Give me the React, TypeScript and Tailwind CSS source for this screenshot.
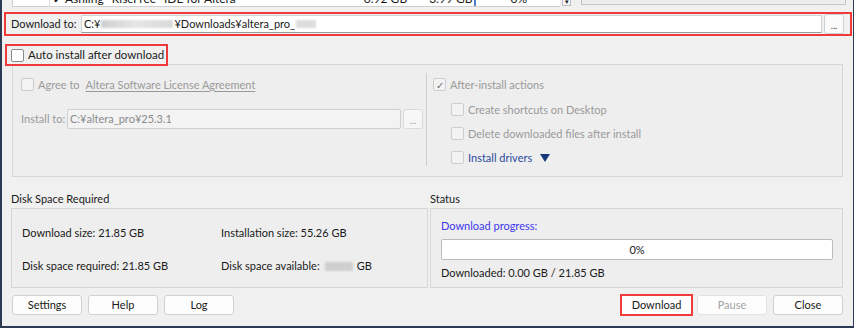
import React from 'react';

const font = { fontFamily: 'Lato, "Segoe UI", sans-serif' };

function Check({ checked = false, disabled = false }: { checked?: boolean; disabled?: boolean }) {
  return (
    <span
      className={`flex h-[13px] w-[13px] shrink-0 items-center justify-center rounded-[2px] border text-[10px] leading-none ${
        disabled ? 'border-[#cdcdcd] bg-[#f3f3f3] text-[#6d6d6d]' : 'border-[#8a8a8a] bg-white text-[#222]'
      }`}
    >
      {checked ? '✓' : ''}
    </span>
  );
}

function Btn({
  children,
  className = '',
}: {
  children: React.ReactNode;
  className?: string;
}) {
  return (
    <div
      className={`flex h-[20px] w-[70px] items-center justify-center rounded-[3px] border border-[#d0d0d0] bg-[#fdfdfd] text-[#1a1a1a] ${className}`}
    >
      {children}
    </div>
  );
}

function Dots({ disabled = false }: { disabled?: boolean }) {
  return (
    <div
      className={`ml-[2px] flex h-[20px] w-[20px] shrink-0 items-end justify-center rounded-[3px] border pb-[3px] text-[9px] leading-none ${
        disabled ? 'border-[#dadada] bg-[#f6f6f6] text-[#9a9a9a]' : 'border-[#cfcfcf] bg-[#fbfbfb] text-[#333]'
      }`}
    >
      ...
    </div>
  );
}

export default function App() {
  return (
    <div
      style={font}
      className="h-[328px] w-[854px] overflow-hidden whitespace-nowrap border-b-2 border-l-2 border-r border-[#2d3a53] bg-[#f0f0f0] text-[11px] leading-[16px] text-[#1a1a1a]"
    >
      {/* table row cut off above */}
      <div className="flex h-[8px] overflow-hidden">
        <div className="ml-[10px] flex h-[7px] w-[548px] border-b border-l border-[#cfcfcf] bg-white">
          <div className="h-full w-[37px] border-r border-[#dcdcdc]" />
          <div className="-mt-[9px] flex items-start">
            <span className="ml-[3px] text-[11px] font-bold">✓</span>
            <span className="ml-[3px] text-[12px]">Ashling* RiscFree* IDE for Altera</span>
            <span className="ml-[128px] text-[12px]">0.92 GB</span>
            <span className="ml-[22px] text-[12px]">3.99 GB</span>
          </div>
          <div className="ml-[2px] h-full w-[2px] bg-[#4b7fc8]" />
          <div className="-mt-[9px] ml-[34px] text-[12px]">0%</div>
        </div>
        <div className="-mt-[8px] ml-[2px] flex h-[14px] w-[9px] items-end justify-center border border-[#bdbdbd] bg-[#f7f7f7] text-[7px] leading-none">
          ▾
        </div>
        <div className="-mt-[8px] ml-[10px] h-[13px] w-[265px] border border-[#c6c6c6] bg-[#ededed]" />
      </div>

      {/* download to */}
      <div className="ml-[2px] mt-[4px] flex h-[24px] w-[848px] items-center border-2 border-[#ef3b3b]">
        <span className="w-[75px] pl-[5px]">Download to:</span>
        <div className="flex h-[18px] w-[741px] items-center overflow-hidden border border-[#d2d2d2] border-b-[#9b9b9b] bg-white px-[2px]">
          <span>C:¥</span>
          <span className="mx-[1px] h-[8px] w-[72px] bg-gradient-to-r from-[#cfcfcf] via-[#e6e6e6] to-[#d8d8d8] blur-[1px]" />
          <span>¥Downloads¥altera_pro_</span>
          <span className="ml-[1px] h-[8px] w-[20px] bg-[#dcdcdc] blur-[1px]" />
        </div>
        <Dots />
      </div>

      {/* auto install */}
      <div className="relative z-10 ml-[3px] mt-[8px] flex h-[22px] w-[163px] items-center border-2 border-[#ef3b3b] pl-[4px]">
        <Check />
        <span className="ml-[4px] text-[11.5px]">Auto install after download</span>
      </div>

      {/* install options */}
      <div className="-mt-[2px] ml-[10px] flex h-[113px] w-[831px] border border-[#d6d6d6] bg-[#eeeeee]">
        <div className="w-[413px] pl-[8px] pt-[13px] text-[#9a9a9a]">
          <div className="flex h-[13px] items-center">
            <Check disabled />
            <span className="ml-[4px]">Agree to</span>
            <span className="ml-[6px] underline decoration-[#9a9a9a] underline-offset-2">
              Altera Software License Agreement
            </span>
          </div>
          <div className="mt-[18px] flex h-[20px] items-center">
            <span className="w-[46px]">Install to:</span>
            <div className="flex h-[20px] w-[334px] items-center rounded-[2px] border border-[#cfcfcf] bg-[#f3f3f3] px-[2px] text-[#8a8a8a]">
              C:¥altera_pro¥25.3.1
            </div>
            <Dots disabled />
          </div>
        </div>
        <div className="mt-[8px] h-[93px] w-px bg-[#cfcfcf]" />
        <div className="pl-[6px] pt-[13px] text-[#9a9a9a]">
          <div className="flex h-[13px] items-center">
            <Check checked disabled />
            <span className="ml-[4px]">After-install actions</span>
          </div>
          <div className="ml-[18px] mt-[12px] flex flex-col gap-[11px]">
            <div className="flex h-[13px] items-center">
              <Check disabled />
              <span className="ml-[4px]">Create shortcuts on Desktop</span>
            </div>
            <div className="flex h-[13px] items-center">
              <Check disabled />
              <span className="ml-[4px]">Delete downloaded files after install</span>
            </div>
            <div className="flex h-[13px] items-center">
              <Check disabled />
              <span className="ml-[4px] text-[#2c4aa0]">Install drivers</span>
              <svg className="ml-[8px]" width="10" height="8" viewBox="0 0 10 8">
                <path d="M0 0 H10 L5 8 Z" fill="#163a7c" />
              </svg>
            </div>
          </div>
        </div>
      </div>

      {/* disk space + status */}
      <div className="ml-[9px] mt-[14px] flex">
        <div className="w-[417px]">
          <div className="h-[16px]">Disk Space Required</div>
          <div className="mt-[1px] grid h-[80px] grid-cols-[199px_1fr] content-start gap-y-[17px] border border-[#d6d6d6] bg-[#eeeeee] pl-[10px] pt-[16px]">
            <span>Download size: 21.85 GB</span>
            <span>Installation size: 55.26 GB</span>
            <span>Disk space required: 21.85 GB</span>
            <span className="flex items-center">
              Disk space available:
              <span className="ml-[5px] mr-[4px] h-[9px] w-[28px] bg-[#cfcfcf] blur-[1px]" />
              GB
            </span>
          </div>
        </div>
        <div className="ml-[2px] w-[413px]">
          <div className="h-[16px]">Status</div>
          <div className="mt-[1px] h-[80px] border border-[#d6d6d6] bg-[#eeeeee] pl-[10px] pt-[9px]">
            <div className="text-[#3d36ee]">Download progress:</div>
            <div className="mt-[5px] flex h-[21px] w-[392px] items-center justify-center rounded-[2px] border border-[#bcbcbc] bg-white">
              0%
            </div>
            <div className="mt-[5px]">Downloaded: 0.00 GB / 21.85 GB</div>
          </div>
        </div>
      </div>

      {/* buttons */}
      <div className="ml-[10px] mr-[10px] mt-[6px] flex items-center">
        <Btn className="border-[#5b9bd5] bg-[#f4f9fe]">Settings</Btn>
        <Btn className="ml-[6px]">Help</Btn>
        <Btn className="ml-[6px]">Log</Btn>
        <div className="ml-auto flex h-[22px] w-[73px] items-center justify-center border-2 border-[#ef3b3b] bg-[#fdfdfd]">
          Download
        </div>
        <Btn className="ml-[4px] border-[#e2e2e2] bg-[#f5f5f5] text-[#a3a3a3]">Pause</Btn>
        <Btn className="ml-[6px]">Close</Btn>
      </div>
    </div>
  );
}
